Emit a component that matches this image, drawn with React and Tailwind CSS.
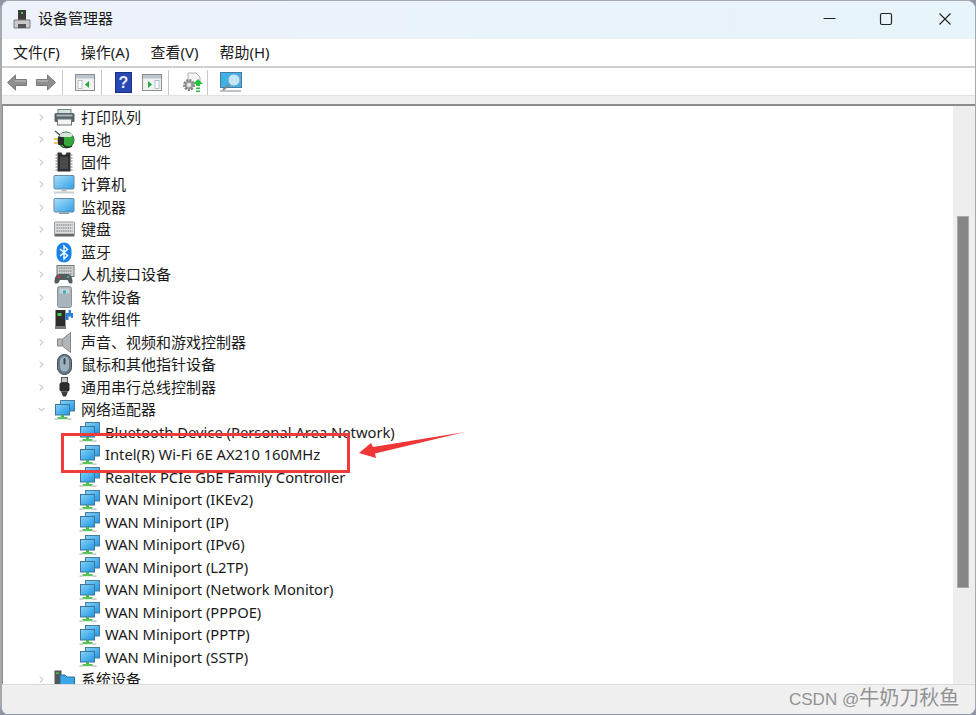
import { ChevronRight, ChevronDown } from 'lucide-react'

const UI_FONT = '"Noto Sans", "Noto Sans CJK SC", sans-serif'

function Monitor({ small }) {
  return (
    <svg width="22" height="21" viewBox="0 0 22 21">
      <defs>
        <linearGradient id="scr" x1="0" y1="0" x2="1" y2="1">
          <stop offset="0" stopColor="#a8e0fa" />
          <stop offset="1" stopColor="#2f9fe6" />
        </linearGradient>
      </defs>
      <rect x="1" y="1.500" width="20" height="13.500" rx="1" fill="url(#scr)" stroke="#6b8aa0" />
      {small ? (
        <rect x="6" y="15.500" width="10" height="1.500" fill="#8a9aa5" />
      ) : (
        <>
          <rect x="8.500" y="15.500" width="5" height="2" fill="#b0bbc2" />
          <rect x="1" y="17.500" width="20" height="2" fill="#c8d0d6" />
        </>
      )}
    </svg>
  )
}

function NetIcon() {
  return (
    <svg width="21" height="20" viewBox="0 0 21 20" className="shrink-0">
      <defs>
        <linearGradient id="net" x1="0" y1="0" x2="1" y2="1">
          <stop offset="0" stopColor="#86d2f7" />
          <stop offset="1" stopColor="#1f97e6" />
        </linearGradient>
      </defs>
      <rect x="6.500" y="0.500" width="14" height="10.500" fill="url(#net)" stroke="#4a7d9c" />
      <rect x="1.500" y="4.500" width="14" height="10.500" fill="url(#net)" stroke="#3f7597" />
      <rect x="7" y="15" width="3" height="2.500" fill="#46b64c" />
      <rect x="3.500" y="17" width="10" height="2.200" fill="#58c45a" />
      <rect x="0.500" y="18.500" width="3" height="1.200" fill="#b5b5b5" />
      <rect x="13.500" y="18.500" width="4" height="1.200" fill="#b5b5b5" />
    </svg>
  )
}

const ICONS = {
  printer: (
    <svg width="21" height="17" viewBox="0 0 21 17">
      <rect x="4" y="0.500" width="13" height="4" fill="#d6e4d6" stroke="#75867a" />
      <rect x="0.500" y="4" width="20" height="9" rx="1.500" fill="#56636b" />
      <rect x="2.500" y="5.500" width="16" height="2" fill="#a9b3b9" />
      <rect x="3.500" y="10" width="14" height="6" fill="#f3f3f3" stroke="#6f767a" />
    </svg>
  ),
  battery: (
    <svg width="21" height="19" viewBox="0 0 21 19">
      <circle cx="12" cy="10" r="8" fill="#35a83a" stroke="#2c6e30" />
      <path d="M5 5a8 5 0 0 1 14 0l-2 2H7z" fill="#d9e4da" />
      <path d="M1 1l5 4" stroke="#555" strokeWidth="1.500" fill="none" />
      <rect x="4" y="7" width="6" height="8" rx="1" fill="#2b2b2b" />
      <path d="M0 9h4M0 13h4" stroke="#e0b030" strokeWidth="1.500" />
      <path d="M9 14c2 4 6 4 9 2" stroke="#222" strokeWidth="1.500" fill="none" />
    </svg>
  ),
  firmware: (
    <svg width="18" height="20" viewBox="0 0 18 20">
      <path d="M2.500 0.500h4a2.500 2.500 0 0 0 5 0h4v19h-13z" fill="#2f2f2f" />
      <path d="M0.500 3h2M0.500 6h2M0.500 9h2M0.500 12h2M0.500 15h2M0.500 18h2M15.500 3h2M15.500 6h2M15.500 9h2M15.500 12h2M15.500 15h2M15.500 18h2" stroke="#777" strokeWidth="1.200" />
      <rect x="5" y="5" width="8" height="12" fill="#4a4a4a" />
    </svg>
  ),
  computer: <Monitor />,
  monitor: <Monitor small />,
  keyboard: (
    <svg width="21" height="17" viewBox="0 0 21 17">
      <rect x="0.500" y="1" width="20" height="12" rx="1" fill="#dcdfe1" stroke="#969b9f" />
      <path d="M2.500 4h16M2.500 7h16M2.500 10h16" stroke="#8f959a" strokeWidth="1.300" strokeDasharray="1.500 0.700" />
      <rect x="0.500" y="13" width="20" height="2.500" fill="#62686c" />
    </svg>
  ),
  bluetooth: (
    <svg width="16" height="21" viewBox="0 0 16 21">
      <rect x="0.500" y="0.500" width="15" height="20" rx="7.500" fill="#1683ea" />
      <path d="M4 7l7.500 6.500L8 17V4l3.500 3.500L4 14" fill="none" stroke="#fff" strokeWidth="1.400" />
    </svg>
  ),
  hid: (
    <svg width="21" height="20" viewBox="0 0 21 20">
      <rect x="3" y="0.500" width="17" height="11" fill="#cdd1d4" stroke="#6f7477" />
      <path d="M5 3h13M5 6h13M5 9h13" stroke="#777" strokeWidth="1.200" strokeDasharray="1.500 0.700" />
      <path d="M0.500 17c0-5 2-8 5-8h8c3 0 5 3 5 8 0 2-3 2-4 0l-1-2H6l-1 2c-1 2-4.500 2-4.500 0z" fill="#555c61" />
      <circle cx="5" cy="12" r="1.300" fill="#d33" />
      <circle cx="14" cy="12" r="1.300" fill="#3a6" />
    </svg>
  ),
  swdevice: (
    <svg width="15" height="22" viewBox="0 0 15 22">
      <rect x="0.500" y="0.500" width="14" height="21" rx="2" fill="#a9b3ba" stroke="#8b949a" />
      <rect x="2.500" y="2.500" width="10" height="5" fill="#c9d0d4" />
      <rect x="6" y="4.500" width="3" height="3" fill="#2fb6bb" />
    </svg>
  ),
  swcomp: (
    <svg width="18" height="19" viewBox="0 0 18 19">
      <rect x="0.500" y="0" width="10" height="16" fill="#2d2d2d" />
      <rect x="2.500" y="3" width="4" height="3" fill="#3fd24a" />
      <path d="M0 16h11v3H0z" fill="#777" />
      <path d="M10.500 3h3V0h2.500v3H18v5h-2v-1.500h-2.500V10h-3z" fill="#2b7fd6" />
    </svg>
  ),
  audio: (
    <svg width="14" height="21" viewBox="0 0 14 21">
      <path d="M0.500 7h5l8-6.500v20l-8-6.500h-5z" fill="#b3b6b8" stroke="#85898b" />
      <path d="M5.500 7v7" stroke="#8c9092" />
    </svg>
  ),
  mouse: (
    <svg width="15" height="21" viewBox="0 0 15 21">
      <rect x="0.500" y="0.500" width="14" height="20" rx="7" fill="#657988" stroke="#3d4a54" />
      <rect x="3" y="2.500" width="9" height="15" rx="4.500" fill="#9fb0bd" />
      <rect x="6.500" y="4" width="2" height="6.500" rx="1" fill="#39444c" />
    </svg>
  ),
  usb: (
    <svg width="11" height="20" viewBox="0 0 11 20">
      <rect x="2.500" y="0.500" width="6" height="5" fill="#c5c5c5" stroke="#555" />
      <rect x="0.500" y="5.500" width="10" height="9" rx="2" fill="#2c2c2c" />
      <path d="M2 14.500h7l-2 5H4z" fill="#3c3c3c" />
    </svg>
  ),
  network: <NetIcon />,
  system: (
    <svg width="21" height="20" viewBox="0 0 21 20">
      <rect x="0.500" y="0.500" width="7" height="19" fill="#555" />
      <rect x="2" y="2.500" width="3" height="1.500" fill="#4c4" />
      <path d="M6 5h5l2 2h7.500v13H6z" fill="#3ba6e8" stroke="#24709f" />
    </svg>
  ),
}

const CATEGORIES_TOP = [
  ['printer', '打印队列'],
  ['battery', '电池'],
  ['firmware', '固件'],
  ['computer', '计算机'],
  ['monitor', '监视器'],
  ['keyboard', '键盘'],
  ['bluetooth', '蓝牙'],
  ['hid', '人机接口设备'],
  ['swdevice', '软件设备'],
  ['swcomp', '软件组件'],
  ['audio', '声音、视频和游戏控制器'],
  ['mouse', '鼠标和其他指针设备'],
  ['usb', '通用串行总线控制器'],
]

const ADAPTERS = [
  'Bluetooth Device (Personal Area Network)',
  'Intel(R) Wi-Fi 6E AX210 160MHz',
  'Realtek PCIe GbE Family Controller',
  'WAN Miniport (IKEv2)',
  'WAN Miniport (IP)',
  'WAN Miniport (IPv6)',
  'WAN Miniport (L2TP)',
  'WAN Miniport (Network Monitor)',
  'WAN Miniport (PPPOE)',
  'WAN Miniport (PPTP)',
  'WAN Miniport (SSTP)',
]

function Category({ icon, label, open }) {
  return (
    <div className="flex h-[22.5px] items-center whitespace-nowrap">
      <span className="flex w-[44px] shrink-0 justify-end text-[#8a8a8a]">
        {open ? <ChevronDown size={11} strokeWidth={1.5} /> : <ChevronRight size={11} strokeWidth={1.5} />}
      </span>
      <span className="flex h-[22.5px] w-[34px] shrink-0 items-center justify-center">{ICONS[icon]}</span>
      <span>{label}</span>
    </div>
  )
}

function Adapter({ label }) {
  return (
    <div className="flex h-[22.5px] items-center whitespace-nowrap pl-[76px]">
      <span className="flex w-[26px] shrink-0 items-center"><NetIcon /></span>
      <span className="text-[14.75px]">{label}</span>
    </div>
  )
}

function ToolbarSep({ className }) {
  return <span className={`h-[25px] w-px bg-[#c8c8c8] ${className}`} />
}

function Arrow({ flip }) {
  return (
    <svg width="20" height="17" viewBox="0 0 20 17" style={flip ? { transform: 'scaleX(-1)' } : undefined}>
      <path d="M0.500 8.500l8-7.500v4.500h11v6h-11V16z" fill="#8f8f8f" stroke="#7a7a7a" />
      <path d="M8 7h11" stroke="#b5b5b5" strokeWidth="1.500" />
    </svg>
  )
}

function PaneIcon({ right }) {
  return (
    <svg width="20" height="17" viewBox="0 0 20 17">
      <rect x="0.500" y="0.500" width="19" height="16" fill="#f1f1f1" stroke="#8d8d8d" />
      <rect x="1" y="1" width="18" height="3.500" fill="#bcc6cf" />
      <rect x={right ? 13 : 3} y="6.500" width="4" height="8" fill="#fff" stroke="#8fa6bd" strokeWidth="0.700" />
      {right ? (
        <path d="M6 7v7l4-3.500z" fill="#25a83a" />
      ) : (
        <path d="M14 7v7l-4-3.500z" fill="#25a83a" />
      )}
    </svg>
  )
}

export default function App() {
  return (
    <div
      className="relative h-[715px] w-[976px] overflow-hidden bg-[#8f93a6] text-[#1a1a1a]"
      style={{ fontFamily: UI_FONT }}
    >
      <div className="flex h-[714px] w-[976px] flex-col overflow-hidden rounded-t-[9px] rounded-b-[8px] border-t border-r-[1.5px] border-l-[2px] border-[#a6a9b2] bg-white">
        {/* Title bar */}
        <header className="flex h-[38px] shrink-0 items-center bg-gradient-to-r from-[#eef2fa] via-[#e9f3fa] to-[#e7f4f9]">
          <svg width="20" height="20" viewBox="0 0 20 20" className="mb-[2px] ml-[10px]">
            <rect x="6" y="1" width="8" height="10" fill="#3b3b3b" />
            <rect x="9" y="3" width="2" height="2" fill="#3fd24a" />
            <path d="M2 11h16v8H2z" fill="#c9c9c9" stroke="#7b7b7b" />
            <rect x="6" y="15" width="8" height="4" fill="#555" />
          </svg>
          <span className="mb-[3px] ml-[6px] text-[15px] leading-none">设备管理器</span>
          <div className="mb-[2px] ml-auto flex items-center">
            <svg width="14" height="14" viewBox="0 0 14 14" className="mr-[43px]">
              <path d="M1.500 6.500h12" stroke="#222" strokeWidth="1.100" />
            </svg>
            <svg width="14" height="14" viewBox="0 0 14 14" className="mr-[45px]">
              <rect x="1.500" y="1.500" width="11" height="11" rx="1.500" fill="none" stroke="#222" strokeWidth="1.200" />
            </svg>
            <svg width="14" height="14" viewBox="0 0 14 14" className="mr-[23px]">
              <path d="M1.500 1.500l11 11M12.500 1.500l-11 11" stroke="#222" strokeWidth="1.100" />
            </svg>
          </div>
        </header>

        {/* Menu */}
        <nav className="flex h-[29px] shrink-0 items-center gap-[21px] border-b-[2px] border-[#cfd0d2] pl-[11px] text-[15px] leading-none">
          <span>文件(F)</span>
          <span>操作(A)</span>
          <span>查看(V)</span>
          <span>帮助(H)</span>
        </nav>

        {/* Toolbar */}
        <div className="flex h-[28px] shrink-0 items-center border-b border-[#e3e3e3] pl-[5px] pt-[2px]">
          <Arrow />
          <span className="w-[9px]" />
          <Arrow flip />
          <ToolbarSep className="ml-[6px] mr-[12px]" />
          <PaneIcon />
          <ToolbarSep className="ml-[6px] mr-[13px]" />
          <svg width="17" height="21" viewBox="0 0 17 21">
            <rect x="0.500" y="0.500" width="16" height="20" fill="#2747b5" stroke="#1a2f80" />
            <text x="8.500" y="16" textAnchor="middle" fontSize="16" fontWeight="700" fill="#e8ecf8" fontFamily="Liberation Sans">?</text>
          </svg>
          <span className="w-[10px]" />
          <PaneIcon right />
          <ToolbarSep className="ml-[6px] mr-[12px]" />
          <svg width="22" height="22" viewBox="0 0 22 22">
            <path d="M7 1h8l4 4v6H7z" fill="#f5f5f5" stroke="#b0b0b0" />
            <circle cx="8" cy="13" r="4.500" fill="#a8a8a8" stroke="#8a8a8a" strokeWidth="3" strokeDasharray="2 1" />
            <circle cx="8" cy="13" r="2" fill="#eee" />
            <path d="M17 7l5 5h-3v2h-4v-2h-3z" fill="#25c23f" />
            <path d="M15 15.500h4V17h-4zM15 18.500h4V20h-4z" fill="#25c23f" />
          </svg>
          <ToolbarSep className="ml-[4px] mr-[12px]" />
          <svg width="22" height="21" viewBox="0 0 22 21">
            <rect x="0.500" y="0.500" width="21" height="15" fill="#3db1e8" stroke="#4a7d9c" />
            <circle cx="14" cy="8" r="6" fill="#c5e6f6" stroke="#68a7c9" />
            <path d="M9 12.500L3 18" stroke="#7b8790" strokeWidth="2" />
            <path d="M0 19h21" stroke="#a5adb3" strokeWidth="1.500" />
          </svg>
        </div>

        {/* Client area */}
        <div className="flex min-h-0 flex-1 flex-col bg-[#f0f0f0] pt-[8px]">
          <div className="flex min-h-0 flex-1 border-t-[2px] border-l border-[#8c8c8c] bg-white">
            <div className="min-w-0 flex-1 overflow-hidden text-[15px] leading-none">
              {CATEGORIES_TOP.map(([icon, label]) => (
                <Category key={label} icon={icon} label={label} />
              ))}
              <Category icon="network" label="网络适配器" open />
              {ADAPTERS.map((a) => (
                <Adapter key={a} label={a} />
              ))}
              <Category icon="system" label="系统设备" />
            </div>
            {/* Scrollbar */}
            <div className="flex w-[22px] shrink-0 flex-col bg-[#eeeeee] pl-[4px] pr-[6px] pt-[110px]">
              <div className="h-[372px] w-full border border-[#a9a9a9] bg-[#868686]" />
            </div>
          </div>
          {/* Status bar */}
          <div className="h-[30px] shrink-0 border-t border-[#d8d8d8] bg-[#f0f0f0]" />
        </div>
      </div>

      {/* Annotation over the screenshot */}
      <div className="pointer-events-none absolute left-[61px] top-[433px] h-[40px] w-[289px] border-[3px] border-[#ee3b3b]" />
      <svg className="pointer-events-none absolute left-[358px] top-[430px]" width="110" height="30" viewBox="0 0 110 30">
        <path d="M1 23L13 13l2 4L107 2 17 23.500 18 28z" fill="#ee3636" />
      </svg>
      <span className="pointer-events-none absolute left-[789px] top-[683px] whitespace-nowrap text-[#939393]">
        <span className="text-[17px]" style={{ fontFamily: '"Liberation Sans", sans-serif' }}>CSDN @</span>
        <span className="text-[20px]">牛奶刀秋鱼</span>
      </span>
    </div>
  )
}
